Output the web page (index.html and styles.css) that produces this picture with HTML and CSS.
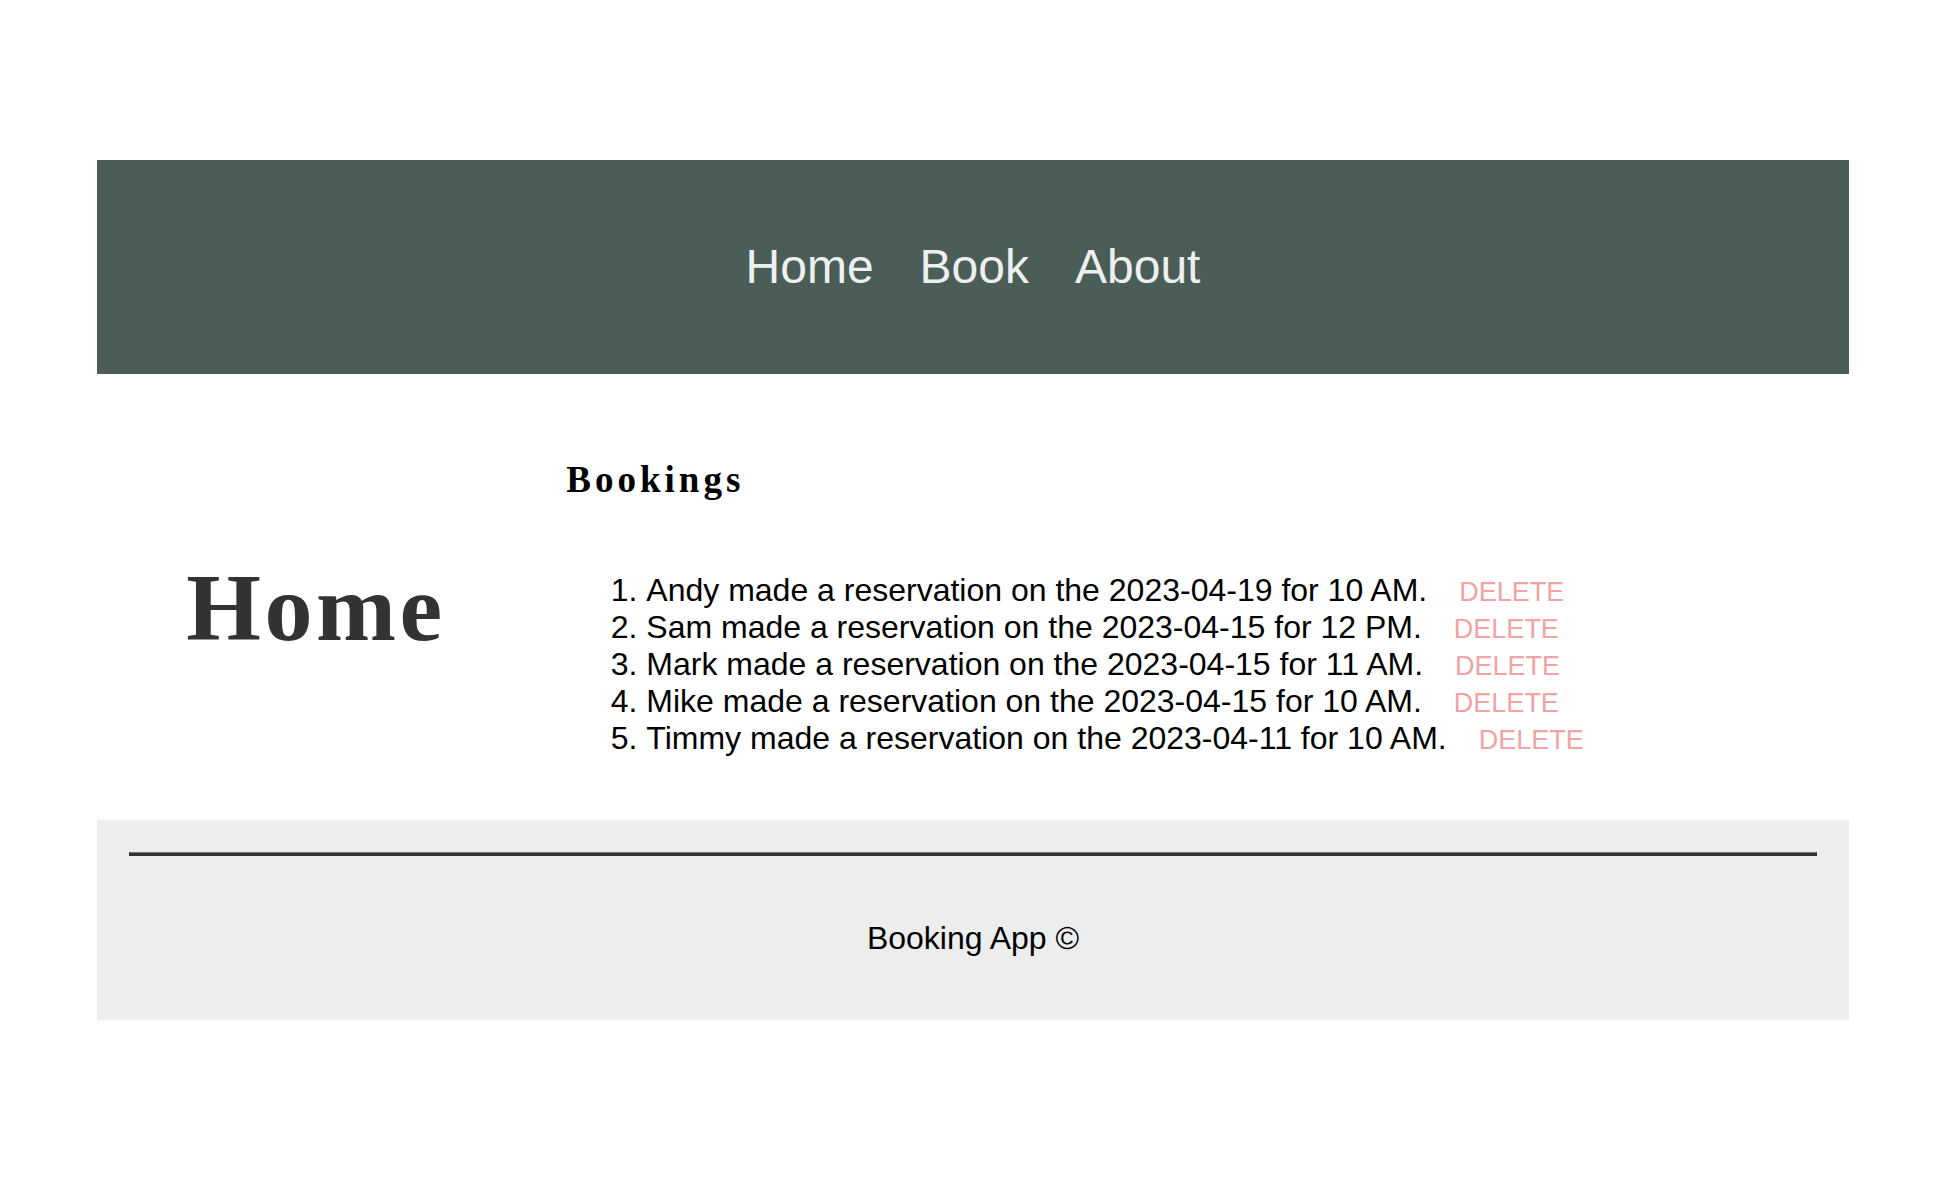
FILE: index.html
```html
<!DOCTYPE html>
<html lang="en">
<head>
<meta charset="utf-8">
<title>Booking App</title>
<link rel="stylesheet" href="styles.css">
</head>
<body>
<div class="page">
  <header class="site-header">
    <nav class="nav">
      <a class="nav-link" href="#">Home</a>
      <a class="nav-link" href="#">Book</a>
      <a class="nav-link" href="#">About</a>
    </nav>
  </header>
  <main class="main">
    <div class="title-col">
      <h1 class="page-title">Home</h1>
    </div>
    <section class="bookings">
      <h2 class="bookings-title">Bookings</h2>
      <ol class="booking-list">
        <li>Andy made a reservation on the 2023-04-19 for 10 AM.<span class="delete">DELETE</span></li>
        <li>Sam made a reservation on the 2023-04-15 for 12 PM.<span class="delete">DELETE</span></li>
        <li>Mark made a reservation on the 2023-04-15 for 11 AM.<span class="delete">DELETE</span></li>
        <li>Mike made a reservation on the 2023-04-15 for 10 AM.<span class="delete">DELETE</span></li>
        <li>Timmy made a reservation on the 2023-04-11 for 10 AM.<span class="delete">DELETE</span></li>
      </ol>
    </section>
  </main>
  <footer class="site-footer">
    <hr class="footer-rule">
    <p class="footer-text">Booking App ©</p>
  </footer>
</div>
</body>
</html>
```
FILE: styles.css
```css
html, body {
  margin: 0;
  padding: 0;
  background: #ffffff;
}

body {
  font-family: "Liberation Sans", Arial, sans-serif;
  color: #000;
}

.page {
  width: 90%;
  margin: 0 auto;
  padding-top: 160px;
}

.site-header {
  height: 214px;
  background: #4a5e57;
  display: flex;
  align-items: center;
  justify-content: center;
}

.nav {
  display: flex;
  gap: 46px;
  margin-top: -2px;
}

.nav-link {
  font-size: 48px;
  color: #eef0ef;
  text-decoration: none;
}

.main {
  display: flex;
  align-items: center;
  padding: 84px 0 63px 89px;
}

.title-col {
  width: 380px;
  flex: none;
}

.page-title {
  margin: 0;
  font-family: "Liberation Serif", "Times New Roman", serif;
  font-weight: bold;
  font-size: 96px;
  letter-spacing: 3.5px;
  color: #333333;
}

.bookings {
  display: flex;
  flex-direction: column;
}

.bookings-title {
  margin: 0 0 71px 0;
  font-family: "Liberation Serif", "Times New Roman", serif;
  font-weight: bold;
  font-size: 37px;
  letter-spacing: 4px;
  color: #000;
}

.booking-list {
  margin: 0;
  padding-left: 80px;
  font-size: 32px;
}

.delete {
  margin-left: 32px;
  font-size: 27px;
  color: #f2a3a3;
  cursor: pointer;
}

.site-footer {
  background: #eceded;
  padding: 32px 32px 0 32px;
  height: 200px;
  box-sizing: border-box;
}

.footer-rule {
  margin: 0;
  height: 2px;
  background: #333333;
  border: 1px solid #333333;
  border-top-color: #777777;
}

.footer-text {
  margin: 64px 0 0 0;
  text-align: center;
  font-size: 32px;
}
```
